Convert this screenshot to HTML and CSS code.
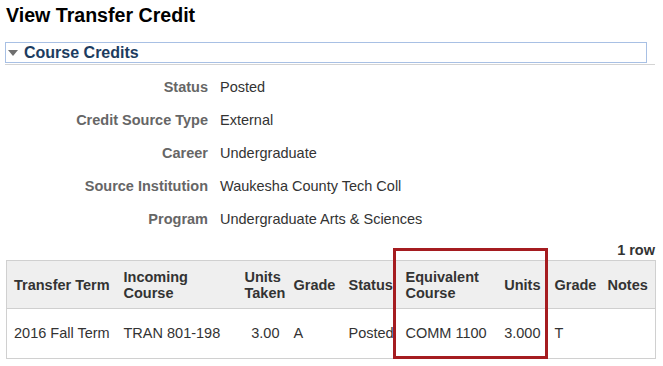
FILE: index.html
```html
<!DOCTYPE html>
<html>
<head>
<meta charset="utf-8">
<link rel="stylesheet" href="styles.css">
</head>
<body>
<div class="page">
  <h1 class="title">View Transfer Credit</h1>
  <div class="section">
    <div class="section-box">
      <svg class="caret" width="10" height="6" viewBox="0 0 10 6"><polygon points="0,0 10,0 5,6" fill="#6f6f6f"/></svg>
      <span class="section-title">Course Credits</span>
    </div>
  </div>
  <div class="fields">
    <div class="label">Status</div><div class="value">Posted</div>
    <div class="label">Credit Source Type</div><div class="value">External</div>
    <div class="label">Career</div><div class="value">Undergraduate</div>
    <div class="label">Source Institution</div><div class="value">Waukesha County Tech Coll</div>
    <div class="label">Program</div><div class="value">Undergraduate Arts &amp; Sciences</div>
  </div>
  <div class="count">1 row</div>
  <div class="grid-wrap">
    <table class="grid">
      <colgroup>
        <col class="c1"><col class="c2"><col class="c3"><col class="c4"><col class="c5"><col class="c6"><col class="c7"><col class="c8"><col class="c9">
      </colgroup>
      <thead>
        <tr>
          <th>Transfer Term</th>
          <th>Incoming<br>Course</th>
          <th class="num">Units<br>Taken</th>
          <th>Grade</th>
          <th>Status</th>
          <th>Equivalent<br>Course</th>
          <th class="num">Units</th>
          <th>Grade</th>
          <th>Notes</th>
        </tr>
      </thead>
      <tbody>
        <tr>
          <td>2016 Fall Term</td>
          <td>TRAN 801-198</td>
          <td class="num">3.00</td>
          <td>A</td>
          <td>Posted</td>
          <td>COMM 1100</td>
          <td class="num">3.000</td>
          <td>T</td>
          <td></td>
        </tr>
      </tbody>
    </table>
    <div class="highlight"></div>
  </div>
</div>
</body>
</html>
```

FILE: styles.css
```css
html, body {
  margin: 0;
  padding: 0;
  background: #ffffff;
}

body {
  font-family: "Liberation Sans", Arial, sans-serif;
  color: #333333;
}

.page {
  padding: 3px 8px 0 6px;
}

.title {
  margin: 0;
  font-size: 19.6px;
  line-height: 24px;
  font-weight: bold;
  color: #000000;
}

.section {
  margin: 15px 0 0 -1px;
  padding-bottom: 1px;
  border-bottom: 1px solid #d4d4d4;
}

.section-box {
  margin-right: 8px;
  height: 21px;
  box-sizing: border-box;
  border: 1px solid #a8c0e4;
  display: flex;
  align-items: center;
  padding-left: 2px;
  gap: 6px;
}

.caret {
  display: block;
  margin-top: 1px;
}

.section-title {
  font-size: 16px;
  font-weight: bold;
  color: #1c3c60;
  line-height: 19px;
}

.fields {
  margin-top: 5px;
  display: grid;
  grid-template-columns: 202px 1fr;
  column-gap: 12px;
  grid-auto-rows: 33px;
  align-items: center;
  font-size: 14.5px;
}

.label {
  text-align: right;
  font-weight: bold;
  color: #666666;
}

.value {
  color: #333333;
}

.count {
  margin-top: 6px;
  text-align: right;
  font-size: 14.5px;
  font-weight: bold;
  line-height: 18px;
  color: #333333;
  margin-bottom: 1px;
}

.grid-wrap {
  position: relative;
}

.grid {
  width: 649px;
  border-collapse: collapse;
  table-layout: fixed;
  font-size: 14.5px;
  border: 1px solid #d0d0d0;
}

.c1 { width: 110px; }
.c2 { width: 121px; }
.c3 { width: 49px; }
.c4 { width: 55px; }
.c5 { width: 57px; }
.c6 { width: 98px; }
.c7 { width: 51px; }
.c8 { width: 53px; }
.c9 { width: 55px; }

.grid th {
  background: #efefef;
  height: 47px;
  padding: 0 7px;
  text-align: left;
  font-weight: bold;
  line-height: 16px;
  color: #333333;
  border-bottom: 1px solid #cfcfcf;
  vertical-align: middle;
  white-space: nowrap;
}

.grid td {
  height: 47px;
  padding: 0 7px 2px;
  color: #333333;
  vertical-align: middle;
  white-space: nowrap;
  line-height: 16px;
}

.grid .num {
  text-align: right;
}

.highlight {
  position: absolute;
  left: 387px;
  top: -12px;
  width: 155px;
  height: 111px;
  box-sizing: border-box;
  border: 3px solid #a51c20;
  pointer-events: none;
}
```
